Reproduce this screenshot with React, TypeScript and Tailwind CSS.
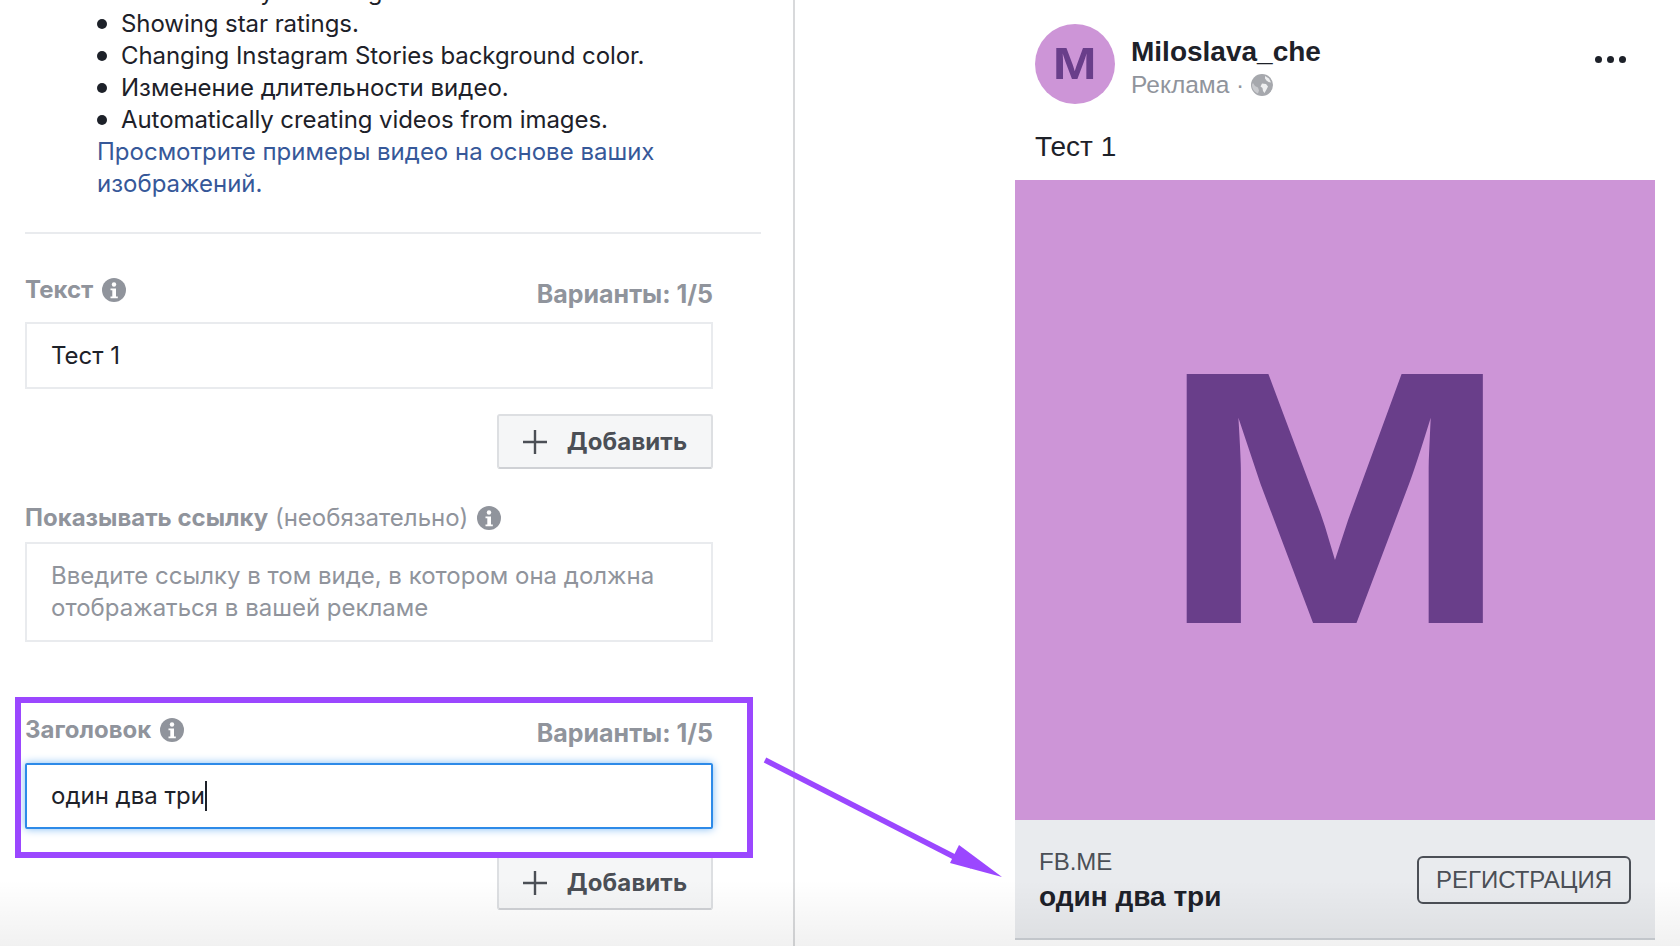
const sans = "font-['Inter',sans-serif]";

function Info({ className = "" }: { className?: string }) {
  return (
    <svg width="24" height="24" viewBox="0 0 24 24" className={className}>
      <circle cx="12" cy="12" r="12" fill="#90949c" />
      <circle cx="12" cy="6.5" r="2.2" fill="#fff" />
      <path d="M8.5 10.500h5.500v8h1.800v1.800H8.500v-1.800h1.800v-6.200H8.500z" fill="#fff" />
    </svg>
  );
}

function Globe() {
  return (
    <svg width="22" height="22" viewBox="0 0 22 22">
      <circle cx="11" cy="11" r="11" fill="#a6a8ad" />
      <path d="M11 9.500l4 .5 2 2.500-1.500 3-2 3.500-1.500-2-.5-3-2-1.500z" fill="#eeeff0" />
      <path d="M14 2l4 2.500 2 4-2.500-.5-2-1.500-1.500-2z" fill="#eeeff0" />
      <path d="M2 9l2 3 3 1.500 1 3-1 3C4 18.500 1 15 1 11c0-.7.4-1.400 1-2z" fill="#c9cace" />
    </svg>
  );
}

function AddButton() {
  return (
    <div className="flex justify-end">
      <div className="flex h-[55px] w-[216px] items-center justify-center gap-[20px] rounded-[3px] border-2 border-[#dddfe2] border-b-[#cfd1d5] bg-[#f5f6f7] text-[24px] font-bold tracking-[0.1px] text-[#4b4f56]">
        <svg width="24" height="24" viewBox="0 0 24 24"><path d="M12 0v24M0 12h24" stroke="#4b4f56" strokeWidth="2.400" /></svg>
        <span>Добавить</span>
      </div>
    </div>
  );
}

function Variants() {
  return <span className="text-[25px] leading-[32px] font-bold text-[#90949c]">Варианты: 1/5</span>;
}

export default function App() {
  return (
    <div className={`relative flex h-[946px] w-[1680px] overflow-hidden bg-white ${sans}`}>
      <div className="h-[946px] w-[795px] shrink-0 border-r-2 border-[#d8d9db] pl-[25px]">
        <ul className="-mt-[24px] pl-[72px] pr-[90px] text-[24px] leading-[32px] text-[#1d2129]">
          {[
            "Automatically selecting music for videos.",
            "Showing star ratings.",
            "Changing Instagram Stories background color.",
            "Изменение длительности видео.",
            "Automatically creating videos from images.",
          ].map((t, i) => (
            <li key={t} className="flex items-center">
              <span className="mr-[14px] h-[10px] w-[10px] rounded-full bg-[#1d2129]" />
              <span className={i === 3 ? "" : "tracking-[-0.07px]"}>{t}</span>
            </li>
          ))}
          <li className="text-[#365899]">Просмотрите примеры видео на основе ваших изображений.</li>
        </ul>
        <div className="mt-[32px] h-[2px] w-[736px] bg-[#e9ebee]" />
        <div className="w-[688px]">
          <div className="mt-[40px] flex items-start justify-between">
            <div className="flex items-center gap-[9px] text-[24px] leading-[32px] font-bold text-[#90949c]">
              <span>Текст</span>
              <Info />
            </div>
            <div className="pt-[4px]"><Variants /></div>
          </div>
          <div className="mt-[12px] flex h-[67px] items-center border-2 border-[#e9ebee] px-[24px] text-[24px] text-[#1d2129]">Тест 1</div>
          <div className="mt-[25px]"><AddButton /></div>
          <div className="mt-[33px] flex items-center gap-[9px] text-[24px] leading-[32px] text-[#90949c]">
            <span><b className="font-bold">Показывать ссылку</b> (необязательно)</span>
            <Info />
          </div>
          <div className="mt-[8px] h-[100px] border-2 border-[#e9ebee] px-[24px] py-[16px] text-[24px] leading-[32px] text-[#90949c]">
            Введите ссылку в том виде, в котором она должна отображаться в вашей рекламе
          </div>
          <div className="mt-[72px] flex items-start justify-between">
            <div className="flex items-center gap-[9px] text-[24px] leading-[32px] font-bold text-[#90949c]">
              <span>Заголовок</span>
              <Info />
            </div>
            <div className="pt-[3px]"><Variants /></div>
          </div>
          <div className="mt-[14px] flex h-[66px] items-center rounded-[2px] border-2 border-[#2d8ae8] px-[24px] text-[24px] text-[#1d2129] shadow-[0_0_8px_#7fbaf3]">
            <span>один два три</span>
            <span className="h-[30px] w-[2px] bg-[#1d2129]" />
          </div>
          <div className="mt-[26px]"><AddButton /></div>
        </div>
      </div>

      <div className="flex-1 pl-[221px] font-['Liberation_Sans',sans-serif]">
        <div className="pl-[19px] pr-[54px] pt-[24px]">
          <div className="flex">
            <div className="flex h-[80px] w-[80px] shrink-0 items-center justify-center rounded-full bg-[#cd95d7] text-[45px] font-bold text-[#693e8a]">
              <span className="scale-x-[1.17]">M</span>
            </div>
            <div className="ml-[16px] flex-1 pt-[11px]">
              <div className="text-[28px] leading-[34px] font-bold text-[#1d2129]">Miloslava_che</div>
              <div className="flex items-center gap-[7px] text-[24.5px] leading-[31px] text-[#90949c]">
                <span>Реклама ·</span>
                <Globe />
              </div>
            </div>
            <div className="mt-[32px] flex h-[7px] gap-[5px]">
              <span className="h-[7px] w-[7px] rounded-full bg-[#1d2129]" />
              <span className="h-[7px] w-[7px] rounded-full bg-[#1d2129]" />
              <span className="h-[7px] w-[7px] rounded-full bg-[#1d2129]" />
            </div>
          </div>
          <div className="mt-[27px] text-[28px] leading-[32px] text-[#1d2129]">Тест 1</div>
        </div>
        <div className="mt-[17px] -ml-[1px] flex h-[640px] w-[640px] items-center justify-center overflow-hidden bg-[#cd95d7] pb-[5px] text-[362px] leading-none font-bold text-[#693e8a]">
          <span className="scale-x-[1.17]">M</span>
        </div>
        <div className="-ml-[1px] flex h-[120px] w-[640px] items-center justify-between border-b-2 border-[#ccd0d5] bg-[#e9ebee] pl-[24px] pr-[24px]">
          <div className="mt-[2px]">
            <div className="text-[24px] leading-[34px] text-[#4b4f56]">FB.ME</div>
            <div className="text-[28px] leading-[36px] font-bold text-[#1d2129]">один два три</div>
          </div>
          <div className="mt-[2px] flex h-[48px] w-[214px] items-center justify-center rounded-[6px] border-[2.500px] border-[#4b4f56] text-[24px] text-[#4b4f56]">РЕГИСТРАЦИЯ</div>
        </div>
      </div>

      <div className="absolute left-[15px] top-[697px] h-[161px] w-[738px] border-[6px] border-[#9b47ff]" />
      <svg className="absolute left-0 top-0" width="1680" height="946">
        <path d="M765 760L972 866" stroke="#9b47ff" strokeWidth="5.500" />
        <path d="M1002 877L950 863L959 845z" fill="#9b47ff" />
      </svg>
      <div className="absolute bottom-0 left-0 h-[66px] w-full bg-gradient-to-b from-transparent to-[#0000000e]" />
    </div>
  );
}
